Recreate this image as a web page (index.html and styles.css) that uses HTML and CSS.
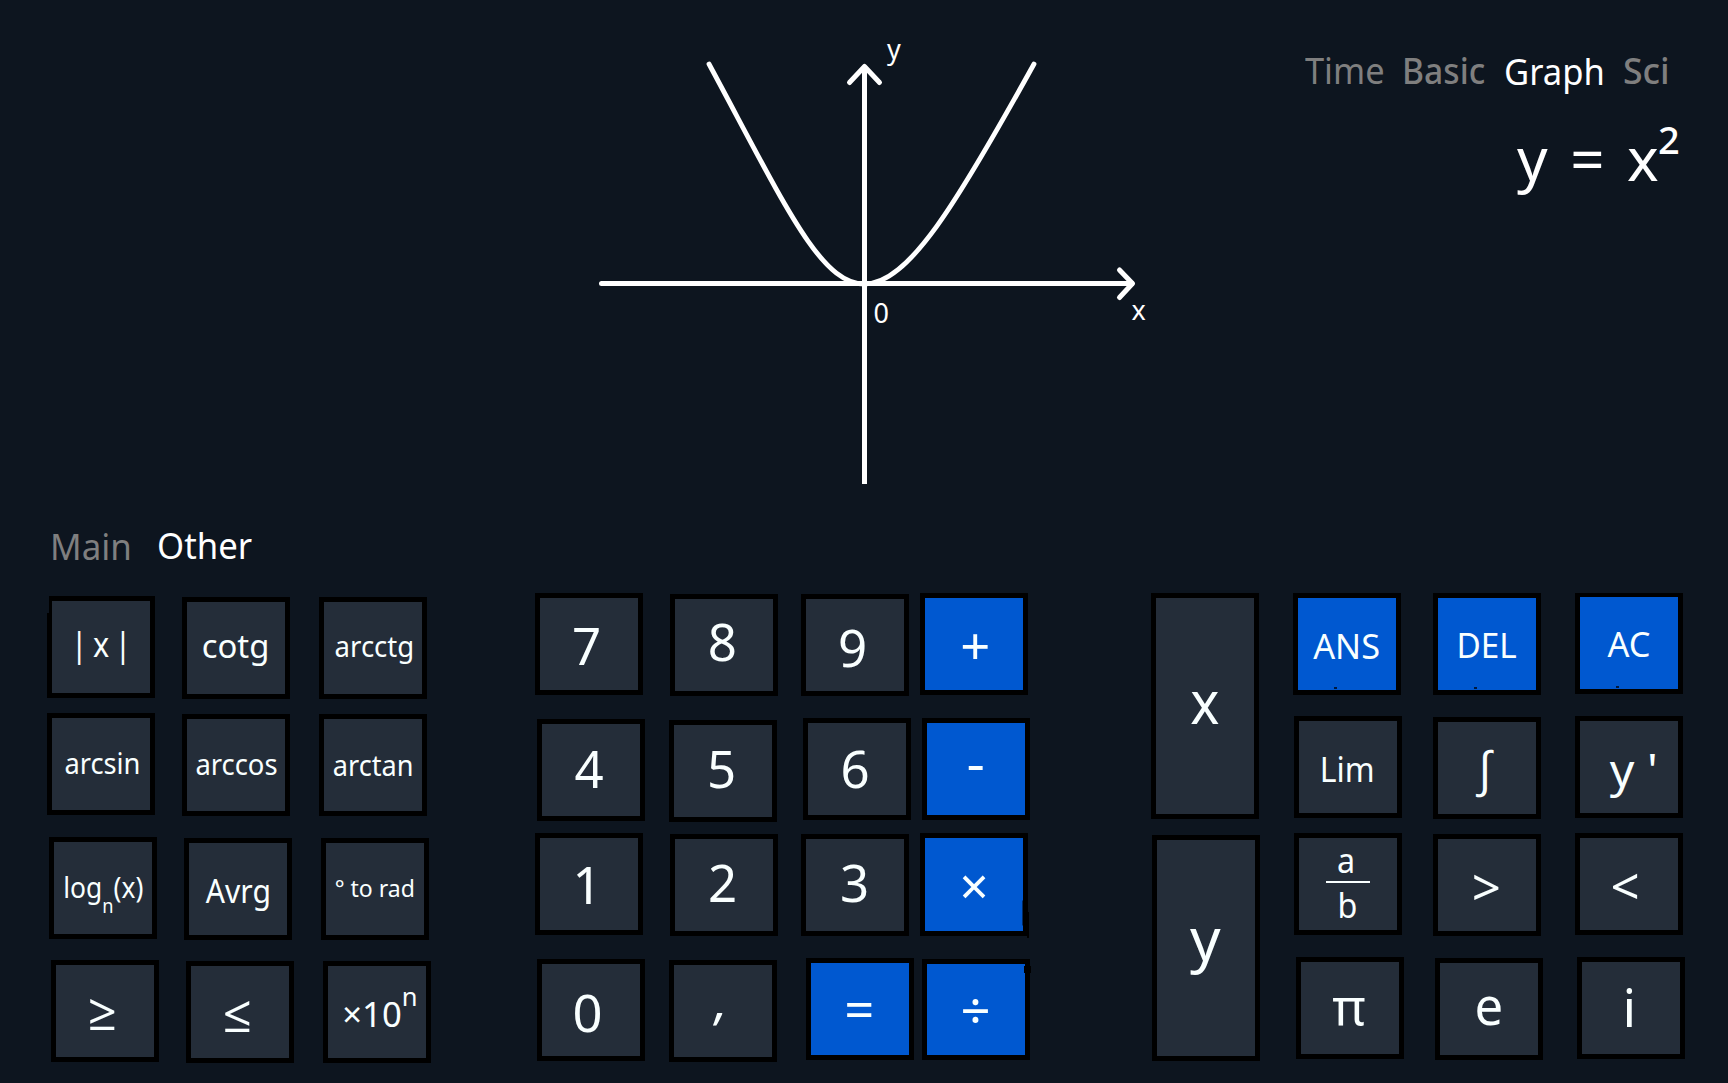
FILE: index.html
```html
<!DOCTYPE html>
<html lang="en">
<head>
<meta charset="utf-8">
<title>Graph calculator</title>
<link rel="stylesheet" href="styles.css">
</head>
<body>
<main class="app">
  <section class="display">
    <svg class="plot" viewBox="580 0 600 500" width="600" height="500">
      <g class="axes">
        <path d="M864.5 66V484" class="butt"/>
        <path d="M601.5 283.5H1132"/>
        <path d="M849.5 82.5L864.5 66.5L879.5 82.5"/>
        <path d="M1119.5 270L1132.5 283.5L1119.5 297.5"/>
      </g>
      <path class="curve" d="M709 64C785 205 820 284 864.5 284C908 284 956 205 1034 64"/>
      <text x="887" y="59">y</text>
      <text x="873.5" y="322.5">0</text>
      <text x="1131.5" y="320">x</text>
    </svg>
    <div class="readout">
      <nav class="modes">
        <a class="tab mode-time">Time</a>
        <a class="tab mode-basic">Basic</a>
        <a class="tab mode-graph active">Graph</a>
        <a class="tab mode-sci">Sci</a>
      </nav>
      <div class="formula">y = x<span class="power">2</span></div>
    </div>
  </section>

  <nav class="pages">
    <a class="tab page-main">Main</a>
    <a class="tab page-other active">Other</a>
  </nav>

  <section class="keyboard">
    <div class="pad functions">
      <div class="key abs"><span>| x |</span></div>
      <div class="key cotg"><span>cotg</span></div>
      <div class="key arcctg"><span>arcctg</span></div>
      <div class="key arcsin"><span>arcsin</span></div>
      <div class="key arccos"><span>arccos</span></div>
      <div class="key arctan"><span>arctan</span></div>
      <div class="key log"><span>log<i class="sub">n</i>(x)</span></div>
      <div class="key avrg"><span>Avrg</span></div>
      <div class="key rad"><span>° to rad</span></div>
      <div class="key gte"><span>≥</span></div>
      <div class="key lte"><span>≤</span></div>
      <div class="key exp"><span>×10<i class="sup">n</i></span></div>
    </div>

    <div class="pad numbers">
      <div class="key n7"><span>7</span></div>
      <div class="key n8"><span>8</span></div>
      <div class="key n9"><span>9</span></div>
      <div class="key blue plus"><span>+</span></div>
      <div class="key n4"><span>4</span></div>
      <div class="key n5"><span>5</span></div>
      <div class="key n6"><span>6</span></div>
      <div class="key blue minus"><span>-</span></div>
      <div class="key n1"><span>1</span></div>
      <div class="key n2"><span>2</span></div>
      <div class="key n3"><span>3</span></div>
      <div class="key blue times"><span>×</span></div>
      <div class="key n0"><span>0</span></div>
      <div class="key comma"><span>,</span></div>
      <div class="key blue equals"><span>=</span></div>
      <div class="key blue divide"><span>÷</span></div>
    </div>

    <div class="pad symbols">
      <div class="key tall var-x"><span>x</span></div>
      <div class="key blue speck ans"><span>ANS</span></div>
      <div class="key blue speck del"><span>DEL</span></div>
      <div class="key blue speck ac"><span>AC</span></div>
      <div class="key lim"><span>Lim</span></div>
      <div class="key integral"><span>∫</span></div>
      <div class="key prime"><span>y '</span></div>
      <div class="key tall var-y"><span>y</span></div>
      <div class="key fraction"><span class="num">a</span><span class="den">b</span></div>
      <div class="key gt"><span>&gt;</span></div>
      <div class="key lt"><span>&lt;</span></div>
      <div class="key pi"><span>π</span></div>
      <div class="key euler"><span>e</span></div>
      <div class="key imag"><span>i</span></div>
    </div>
  </section>
</main>
</body>
</html>
```
FILE: styles.css
```css
* { box-sizing: border-box; }

body {
  margin: 0;
  background: #0d151f;
  color: #fff;
  font-family: "Noto Sans", "Open Sans", sans-serif;
}

.app {
  width: 1728px;
  height: 1083px;
  overflow: hidden;
}

/* Display */
.display {
  display: flex;
  height: 500px;
  padding-left: 580px;
}

.plot { display: block; flex: none; }
.plot text { fill: #fff; font-size: 27px; }
.axes path, .curve {
  fill: none;
  stroke: #fff;
  stroke-width: 5;
  stroke-linecap: round;
  stroke-linejoin: round;
}
.axes .butt { stroke-linecap: butt; }
.curve { stroke-width: 4.8; }

.readout { flex: 1; padding-top: 46px; }

.modes, .pages { display: flex; }

.tab {
  flex: none;
  color: #7f7f7f;
  font-size: 36px;
  line-height: 50px;
  transform: scaleX(var(--sx, 1));
  transform-origin: 0 0;
}
.tab.active { color: #fff; }

.modes { padding-left: 125px; }
.mode-time { width: 97px; --sx: .955; }
.mode-basic { width: 102px; --sx: .935; font-weight: 500; }
.mode-graph { width: 119px; margin-top: 1px; --sx: .96; }
.mode-sci { --sx: .99; font-weight: 500; }

.formula {
  margin: 31px 0 0 337px;
  font-size: 60px;
  line-height: 60px;
  white-space: nowrap;
  word-spacing: 7px;
}
.power {
  margin-left: -1px;
  font-size: 38px;
  font-weight: 500;
  line-height: 0;
  vertical-align: 27px;
}

.pages { height: 93px; padding: 22px 0 0 50px; }
.page-main { width: 107px; --sx: .97; }
.page-other { margin-top: -1px; --sx: .965; }

/* Keyboard */
.keyboard { display: flex; }
.pad { display: grid; align-items: start; align-content: start; }

.functions {
  grid-template-columns: 135px 137px 108px;
  grid-template-rows: 120px 120px 125px 104px;
  margin-left: 47px;
}
.numbers {
  grid-template-columns: 134px 132px 119px 110px;
  grid-template-rows: 125px 115px 125px 103px;
  margin-left: 108px;
}
.symbols {
  grid-template-columns: 142px 140px 141px 110px;
  grid-template-rows: 123px 117px 124px 104px;
  margin-left: 121px;
}

.key {
  width: 108px;
  height: 102px;
  margin: var(--top, 0) 0 0 var(--left, 0);
  padding-top: calc(var(--base) - .388em);
  border: 5px solid #000;
  background: #242d39;
  color: #f9ffff;
  font-size: 51px;
  line-height: 0;
  text-align: center;
  white-space: nowrap;
}
.key span {
  display: inline-block;
  transform: translateX(var(--dx, 0)) scaleX(var(--sx, 1)) skewX(var(--skew, 0deg));
}
.key i { font-style: normal; }
.blue { background: #0058d0; }
.tall { height: 226px; grid-row: span 2; font-size: 60px; }

/* Small wear marks on some of the keys */
.abs, .times, .divide, .speck { position: relative; }
.abs::before, .times::after, .divide::after, .speck::after {
  content: "";
  position: absolute;
}
.abs::before {
  left: -5px;
  top: -5px;
  width: 2px;
  height: 17px;
  background: #0d151f;
}
.speck::after {
  left: 36px;
  bottom: 1px;
  width: 3px;
  height: 2px;
  background: #001a40;
}
.times::after {
  right: -6px;
  bottom: -7px;
  width: 2px;
  height: 26px;
  background: #000;
  box-shadow: -5px -12px 0 -.5px #000;
}
.divide::after {
  right: -6px;
  top: 2px;
  width: 7px;
  height: 7px;
  background: #000;
}

/* Function keys */
.abs { --top: 3px; --base: 56px; --dx: .5px; --sx: .9; font-size: 34px; word-spacing: -3px; }
.cotg { --top: 4px; --base: 56px; --sx: .98; font-size: 33.5px; }
.arcctg { --top: 4px; --base: 55px; --dx: 1.5px; --sx: .95; font-size: 29px; }
.arcsin { --base: 56px; --dx: 1px; --sx: .94; font-size: 29px; }
.arccos { --top: 1px; --base: 56px; --sx: .945; font-size: 29px; }
.arctan { --top: 1px; --base: 57px; --sx: .935; font-size: 29px; }
.log { --top: 4px; --left: 2px; --base: 56px; --dx: .3px; --sx: .91; font-size: 29px; }
.sub { font-size: 20px; vertical-align: -15px; }
.avrg { --top: 5px; --left: 2px; --base: 60px; --dx: .7px; --sx: .94; font-size: 32px; }
.rad { --top: 5px; --left: 2px; --base: 54px; --sx: .96; font-size: 24px; }
.gte { --top: 2px; --left: 4px; --base: 65px; --dx: -3px; }
.lte { --top: 3px; --left: 4px; --base: 66px; --dx: -3px; }
.exp { --top: 3px; --left: 4px; --base: 43px; --dx: 3px; --sx: 1.02; font-size: 34px; }
.sup { font-size: 25px; vertical-align: 21px; }

/* Number keys */
.n7 { --base: 67px; --dx: -2.4px; }
.n8 { --top: 1px; --left: 1px; --base: 62px; --dx: -1.7px; }
.n9 { --top: 1px; --base: 68px; --dx: -2.5px; }
.plus { --base: 67px; --dx: 1.7px; --sx: 1.03; }
.n4 { --top: 1px; --left: 2px; --base: 64px; --dx: -2px; }
.n5 { --top: 2px; --base: 63px; --dx: -1.5px; }
.n6 { --left: 2px; --base: 65px; --dx: -1.8px; }
.minus { --left: 2px; --base: 59px; --dx: -.5px; --sx: 1.12; }
.n1 { --base: 66px; --dx: -2px; }
.n2 { --top: 1px; --left: 1px; --base: 63px; --dx: -1.5px; }
.n3 { --top: 1px; --base: 63px; --dx: -.5px; }
.times { --base: 67px; height: 103px; }
.n0 { --top: 1px; --left: 2px; --base: 68px; --dx: -3px; --sx: 1.03; }
.comma { --top: 2px; --base: 54px; --dx: -1.5px; --skew: -8deg; }
.equals { --left: 5px; --base: 65px; --dx: -.3px; --sx: 1.03; }
.divide { --top: 1px; --left: 2px; --base: 65px; height: 101px; --sx: 1.03; }

/* Symbol keys */
.var-x { --base: 126px; --sx: .92; }
.var-y { --top: 2px; --left: 1px; --base: 121px; --dx: -.7px; }
.ans { --base: 62px; --dx: -.5px; --sx: .98; font-size: 35px; }
.del { --base: 61px; --sx: .95; font-size: 35px; }
.ac { --left: 1px; --base: 61px; height: 101px; border-top-width: 4px; font-size: 35px; --sx: .98; }
.lim { --left: 1px; --base: 61px; --dx: -1px; --sx: .94; font-size: 34px; }
.integral { --top: 1px; --base: 65px; --dx: -2px; font-size: 48px; }
.prime { --left: 1px; --base: 66px; --dx: 5px; --sx: 1.05; font-size: 46px; }
.fraction {
  --left: 1px;
  --base: 35px;
  display: grid;
  grid-template-rows: 45.5px 0;
  justify-items: center;
  font-size: 34px;
  background: linear-gradient(#f9ffff, #f9ffff) 27px 43px / 44px 2px no-repeat #242d39;
}
.num { --dx: -1.5px; --sx: .95; }
.den { --dx: -1px; --sx: .95; }
.gt { --top: 1px; --base: 67px; --dx: -.7px; }
.lt { --left: 1px; --base: 67px; --dx: -4px; }
.pi { --left: 3px; --base: 63px; --dx: -1px; }
.euler { --top: 1px; --left: 2px; --base: 63px; font-size: 53px; --sx: .96; }
.imag { --left: 3px; --base: 66px; --dx: -1.7px; font-size: 53px; }
```
